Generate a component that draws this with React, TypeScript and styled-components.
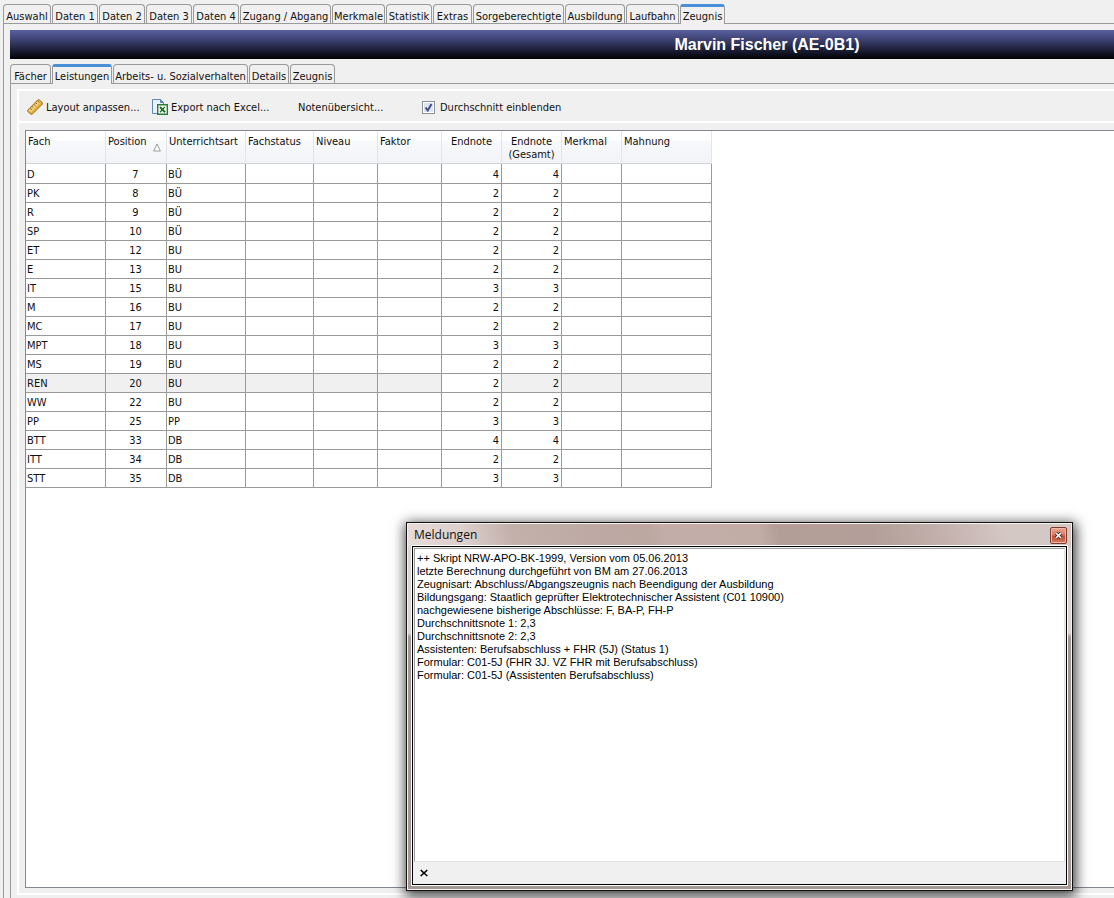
import React, { useState } from "react";
import styled, { createGlobalStyle, css } from "styled-components";

const GlobalStyle = createGlobalStyle`
  *, *::before, *::after { box-sizing: border-box; }
  body {
    margin: 0;
    background: #f0f0f0;
    color: #101010;
    font-family: "DejaVu Sans Condensed", Tahoma, sans-serif;
    font-size: 11px;
    line-height: 13px;
    overflow: hidden;
  }
  button, input, textarea { font: inherit; color: inherit; }
`;

const Page = styled.div`
  display: flex;
  flex-direction: column;
  height: 100vh;
  padding: 4px 0 0 3px;
`;

const TabBar = styled.div`
  display: flex;
  flex: none;
  gap: 1px;
  height: 19px;
`;

const Tab = styled.button<{ $width: number; $active: boolean }>`
  flex: none;
  width: ${(p) => p.$width}px;
  height: 19px;
  padding: 5px 0 0;
  border: 1px solid #9a9a9a;
  border-bottom: 0;
  border-radius: 4px 4px 0 0;
  background: #f0f0f0;
  line-height: 13px;
  white-space: nowrap;
  display: flex;
  align-items: flex-start;
  justify-content: center;
  ${(p) =>
    p.$active &&
    css`
      position: relative;
      height: 20px;
      padding-top: 3px;
      border-top: 3px solid #4a90d9;
      border-radius: 3px 3px 0 0;
    `}
`;

const MainPane = styled.main`
  flex: 1;
  min-height: 0;
  display: flex;
  flex-direction: column;
  border: solid #9a9a9a;
  border-width: 1px 0 0 1px;
  padding: 6px 0 0 6px;
`;

const Banner = styled.h1`
  flex: none;
  height: 29px;
  margin: 0 0 5px;
  padding-left: 410px;
  background: linear-gradient(#59609f, #3b406f 35%, #16182c 75%, #020205);
  color: #fff;
  font: bold 16px/29px "Liberation Sans", Arial, sans-serif;
  text-align: center;
`;

const SubPane = styled.section`
  flex: 1;
  min-height: 0;
  display: flex;
  flex-direction: column;
  border: solid #9a9a9a;
  border-width: 1px 0 0 1px;
  padding: 5px 0 3px 6px;
`;

const Panel = styled.div`
  flex: 1;
  min-height: 0;
  display: flex;
  flex-direction: column;
  border: solid #fff;
  border-width: 2px 0 2px 2px;
`;

const Toolbar = styled.div`
  display: flex;
  flex: none;
  align-items: center;
  height: 32px;
  padding: 2px 0 0 8px;
  border-bottom: 2px solid #fff;
`;

const ToolButton = styled.button<{ $width: number }>`
  display: flex;
  align-items: center;
  gap: 3px;
  width: ${(p) => p.$width}px;
  height: 22px;
  padding: 0;
  border: 0;
  background: none;
  white-space: nowrap;
`;

const CheckLabel = styled.label`
  display: flex;
  align-items: center;
  gap: 5px;
`;

const CheckBox = styled.input`
  appearance: none;
  width: 13px;
  height: 13px;
  margin: 0;
  border: 1px solid #8b8f96;
  outline: 1px solid #fff;
  outline-offset: -2px;
  background: #dfe4ec;
  &:checked {
    background: #dfe4ec
      url("data:image/svg+xml,%3Csvg xmlns='http://www.w3.org/2000/svg' viewBox='0 0 11 11'%3E%3Cpath d='M2.5 5.5 4.7 8.5 8.5 2' fill='none' stroke='%233f4f84' stroke-width='2'/%3E%3C/svg%3E");
  }
`;

const GridFrame = styled.div`
  flex: 1;
  min-height: 0;
  margin: 7px 0 5px 6px;
  border: 1px solid #828790;
  border-right: 0;
  background: #fff;
`;

const Grid = styled.table`
  table-layout: fixed;
  width: 686px;
  border-collapse: separate;
  border-spacing: 0;
`;

type Align = "left" | "center" | "right";

const HeadCell = styled.th<{ $align: Align }>`
  position: relative;
  height: 33px;
  padding: 4px 2px 0;
  border-right: 1px solid #e3e5e8;
  border-bottom: 1px solid #d0d2d5;
  background: linear-gradient(#fff 9px, #f8f9fb 10px, #f1f3f6);
  font-weight: normal;
  text-align: ${(p) => (p.$align === "center" ? "center" : "left")};
  vertical-align: top;
  white-space: nowrap;
`;

const SortMark = styled.svg`
  position: absolute;
  right: 5px;
  bottom: 11px;
`;

const Row = styled.tr<{ $selected: boolean }>`
  background: ${(p) => (p.$selected ? "#f0f0f0" : "#fff")};
`;

const Cell = styled.td<{ $align: Align; $focused: boolean }>`
  height: 19px;
  padding: 1px 2px 0 1px;
  border: solid #999;
  border-width: 0 1px 1px 0;
  text-align: ${(p) => p.$align};
  ${(p) => p.$focused && "background: #fff;"}
  tr:first-child > & {
    height: 20px;
    padding-top: 2px;
  }
`;

const Dialog = styled.section`
  position: absolute;
  left: 406px;
  top: 522px;
  right: 41px;
  height: 369px;
  display: flex;
  flex-direction: column;
  padding: 0 4px 4px;
  border: 1px solid #111;
  box-shadow: inset 0 0 0 1px #f7f2f0, 1px 3px 12px 2px rgba(0, 0, 0, 0.75);
  background:
    linear-gradient(75deg, #e6dcda 0, #dccfcc 9%, #c3b0ab 16%, #bba6a0 36%, #c2ada8 39%, #c1aca6 53%, #b39d97 56%, #b39f99 70%, #c3b0ac 80%, #d4c8c5 90%) 0 0 / 100% 24px no-repeat,
    linear-gradient(#dcd4d2 0 30%, #a39a97 31%);
`;

const TitleBar = styled.header`
  display: flex;
  flex: none;
  justify-content: space-between;
  height: 22px;
  padding: 4px 1px 0 3px;
`;

const DialogTitle = styled.h2`
  margin: 0;
  font: 12px/15px "Open Sans", "Segoe UI", sans-serif;
`;

const CloseButton = styled.button`
  width: 17px;
  height: 17px;
  padding: 0;
  border: 1px solid #7c3a30;
  border-radius: 2px;
  background: linear-gradient(#e9a593, #d97a63 48%, #bf4a30 52%, #d9795c);
  box-shadow: inset 0 0 0 1px #f0b9a8;
  display: grid;
  place-items: center;
`;

const DialogBody = styled.div`
  flex: 1;
  display: flex;
  flex-direction: column;
  border: 1px solid #fff;
  outline: 1px solid #000;
  outline-offset: -2px;
  padding: 2px;
  background: #f0f0f0;
`;

const LogText = styled.textarea`
  flex: 1;
  resize: none;
  margin: 0;
  padding: 3px 2px;
  border: 1px solid #a0a0a0;
  border-right-color: #e3e3e3;
  border-bottom-color: #e3e3e3;
  outline: none;
  background: #fff;
  color: #000;
  font: 11px/13px "Liberation Sans", Arial, sans-serif;
`;

const DialogFooter = styled.footer`
  display: flex;
  flex: none;
  align-items: center;
  height: 21px;
  padding-left: 2px;
`;

const ClearButton = styled.button`
  display: grid;
  place-items: center;
  width: 16px;
  height: 16px;
  padding: 0;
  border: 0;
  background: none;
`;

const mainTabs: [string, number][] = [
  ["Auswahl", 48], ["Daten 1", 46], ["Daten 2", 46], ["Daten 3", 46], ["Daten 4", 46],
  ["Zugang / Abgang", 91], ["Merkmale", 53], ["Statistik", 46], ["Extras", 39],
  ["Sorgeberechtigte", 91], ["Ausbildung", 60], ["Laufbahn", 53], ["Zeugnis", 45],
];

const subTabs: [string, number][] = [
  ["Fächer", 41], ["Leistungen", 60], ["Arbeits- u. Sozialverhalten", 135], ["Details", 40], ["Zeugnis", 45],
];

const columns: { title: string; width: number; align: Align; head?: Align }[] = [
  { title: "Fach", width: 80, align: "left" },
  { title: "Position", width: 61, align: "center", head: "left" },
  { title: "Unterrichtsart", width: 79, align: "left" },
  { title: "Fachstatus", width: 68, align: "left" },
  { title: "Niveau", width: 64, align: "left" },
  { title: "Faktor", width: 64, align: "left" },
  { title: "Endnote", width: 60, align: "right", head: "center" },
  { title: "Endnote\n(Gesamt)", width: 60, align: "right", head: "center" },
  { title: "Merkmal", width: 60, align: "left" },
  { title: "Mahnung", width: 90, align: "left" },
];

const grades: [string, number, string, number][] = [
  ["D", 7, "BÜ", 4], ["PK", 8, "BÜ", 2], ["R", 9, "BÜ", 2], ["SP", 10, "BÜ", 2],
  ["ET", 12, "BU", 2], ["E", 13, "BU", 2], ["IT", 15, "BU", 3], ["M", 16, "BU", 2],
  ["MC", 17, "BU", 2], ["MPT", 18, "BU", 3], ["MS", 19, "BU", 2], ["REN", 20, "BU", 2],
  ["WW", 22, "BU", 2], ["PP", 25, "PP", 3], ["BTT", 33, "DB", 4], ["ITT", 34, "DB", 2],
  ["STT", 35, "DB", 3],
];

const log = [
  "++ Skript NRW-APO-BK-1999, Version vom 05.06.2013",
  "letzte Berechnung durchgeführt von BM am 27.06.2013",
  "Zeugnisart: Abschluss/Abgangszeugnis nach Beendigung der Ausbildung",
  "Bildungsgang: Staatlich geprüfter Elektrotechnischer Assistent (C01 10900)",
  "nachgewiesene bisherige Abschlüsse: F, BA-P, FH-P",
  "Durchschnittsnote 1: 2,3",
  "Durchschnittsnote 2: 2,3",
  "Assistenten: Berufsabschluss + FHR (5J) (Status 1)",
  "Formular: C01-5J (FHR 3J. VZ FHR mit Berufsabschluss)",
  "Formular: C01-5J (Assistenten Berufsabschluss)",
].join("\n");

const RulerIcon = () => (
  <svg width="16" height="16" viewBox="0 0 16 16" aria-hidden="true">
    <path d="M.7 11.2 10.8.8h1.4l3.1 2.8v1.6L5.2 15.3H3.9L.7 12.5z" fill="#dba93c" stroke="#a8781c" />
    <path d="M1.6 11.4 11.4 1.5l2.3 2.1L4 13.6z" fill="#f3d277" />
    <path d="m3.5 9.5 1.3 1.2m.5-3 1 .9m1-2.7 1.3 1.2m.5-3 1 .9m1-2.7 1.3 1.2" stroke="#7d5812" fill="none" />
  </svg>
);

const ExcelIcon = () => (
  <svg width="16" height="16" viewBox="0 0 16 16" aria-hidden="true">
    <path d="M.5.5h8l3 3v11H.5z" fill="#eaf2fb" stroke="#5f87b5" />
    <path d="M8.5.5v3h3z" fill="#5f87b5" stroke="#5f87b5" />
    <path d="M5.7 5.7h9.6v9.6H5.7z" fill="#fff" stroke="#2c7a34" strokeWidth="1.4" />
    <path d="m8 8 5 5.2" stroke="#1f6f29" strokeWidth="2" />
    <path d="M12.8 8 8 13.2" stroke="#1f6f29" strokeWidth="1.3" />
  </svg>
);

function Tabs({ items, active, onSelect }: { items: [string, number][]; active: number; onSelect: (i: number) => void }) {
  return (
    <TabBar role="tablist">
      {items.map(([label, width], i) => (
        <Tab key={label} role="tab" aria-selected={i === active} $width={width} $active={i === active} onClick={() => onSelect(i)}>
          {label}
        </Tab>
      ))}
    </TabBar>
  );
}

export default function App() {
  const [mainTab, setMainTab] = useState(12);
  const [subTab, setSubTab] = useState(1);
  const [average, setAverage] = useState(true);

  return (
    <>
      <GlobalStyle />
      <Page>
        <Tabs items={mainTabs} active={mainTab} onSelect={setMainTab} />
        <MainPane>
          <Banner>Marvin Fischer (AE-0B1)</Banner>
          <Tabs items={subTabs} active={subTab} onSelect={setSubTab} />
          <SubPane>
            <Panel>
              <Toolbar>
                <ToolButton $width={125}><RulerIcon />Layout anpassen...</ToolButton>
                <ToolButton $width={146}><ExcelIcon />Export nach Excel...</ToolButton>
                <ToolButton $width={124}>Notenübersicht...</ToolButton>
                <CheckLabel>
                  <CheckBox type="checkbox" checked={average} onChange={(e) => setAverage(e.target.checked)} />
                  Durchschnitt einblenden
                </CheckLabel>
              </Toolbar>
              <GridFrame>
                <Grid>
                  <colgroup>
                    {columns.map((c) => <col key={c.title} style={{ width: c.width }} />)}
                  </colgroup>
                  <thead>
                    <tr>
                      {columns.map((c) => (
                        <HeadCell key={c.title} scope="col" $align={c.head ?? c.align}>
                          {c.title.split("\n").map((line, i) => (
                            <React.Fragment key={line}>{i > 0 && <br />}{line}</React.Fragment>
                          ))}
                          {c.title === "Position" && (
                            <SortMark width="8" height="9" viewBox="0 0 8 9" aria-hidden="true">
                              <path d="M4 1 7.4 8H.6z" fill="#fff" stroke="#9a9a9a" />
                            </SortMark>
                          )}
                        </HeadCell>
                      ))}
                    </tr>
                  </thead>
                  <tbody>
                    {grades.map(([subject, position, kind, grade]) => {
                      const selected = subject === "REN";
                      const values = [subject, position, kind, "", "", "", grade, grade, "", ""];
                      return (
                        <Row key={subject} $selected={selected}>
                          {values.map((v, i) => (
                            <Cell key={i} $align={columns[i].align} $focused={selected && i === 6}>{v}</Cell>
                          ))}
                        </Row>
                      );
                    })}
                  </tbody>
                </Grid>
              </GridFrame>
            </Panel>
          </SubPane>
        </MainPane>
      </Page>
      <Dialog role="dialog" aria-labelledby="log-title">
        <TitleBar>
          <DialogTitle id="log-title">Meldungen</DialogTitle>
          <CloseButton aria-label="Schließen">
            <svg width="9" height="9" viewBox="0 0 9 9" aria-hidden="true">
              <path d="m2 2 5 5M7 2 2 7" stroke="#4a2a26" strokeWidth="3.2" />
              <path d="m2 2 5 5M7 2 2 7" stroke="#fff" strokeWidth="1.7" />
            </svg>
          </CloseButton>
        </TitleBar>
        <DialogBody>
          <LogText aria-label="Meldungen" readOnly value={log} />
          <DialogFooter>
            <ClearButton aria-label="Meldungen leeren">
              <svg width="8" height="8" viewBox="0 0 8 8" aria-hidden="true">
                <path d="m.7 1 6.6 6M7.3 1 .7 7" stroke="#000" strokeWidth="1.6" />
              </svg>
            </ClearButton>
          </DialogFooter>
        </DialogBody>
      </Dialog>
    </>
  );
}
